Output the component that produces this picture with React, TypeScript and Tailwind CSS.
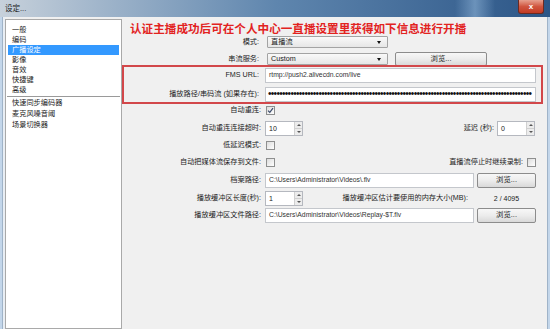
import React from "react";

const labelCls = "text-right text-[7.2px] leading-none text-[#1c1c1c] shrink-0 whitespace-nowrap";

function Check({ checked = false }: { checked?: boolean }) {
  return (
    <div className="w-[9px] h-[9px] border border-[#8e8f8f] bg-gradient-to-br from-[#dcdcdc] to-white flex items-center justify-center">
      {checked && (
        <svg width="7" height="7" viewBox="0 0 7 7">
          <path d="M1 3.6 L2.8 5.4 L6 1.2" stroke="#3a4a6a" strokeWidth="1.2" fill="none" />
        </svg>
      )}
    </div>
  );
}

function Spin({ value, className = "" }: { value: string; className?: string }) {
  return (
    <div className={`w-[38px] h-[15px] border border-[#b5b8bf] bg-white flex ${className}`}>
      <div className="flex-1 text-[7px] leading-none pl-[3px] pt-[3px] text-[#222]">{value}</div>
      <div className="w-[8px] flex flex-col border-l border-[#d0d0d0]">
        <div className="flex-1 bg-[#ececec] border-b border-[#d0d0d0] flex items-center justify-center">
          <div className="w-0 h-0 border-l-[2px] border-r-[2px] border-b-[2px] border-l-transparent border-r-transparent border-b-[#555]" />
        </div>
        <div className="flex-1 bg-[#ececec] flex items-center justify-center">
          <div className="w-0 h-0 border-l-[2px] border-r-[2px] border-t-[2px] border-l-transparent border-r-transparent border-t-[#555]" />
        </div>
      </div>
    </div>
  );
}

function Btn({ w, h = "h-[15px]" }: { w: string; h?: string }) {
  return (
    <div className={`${w} ${h} border border-[#8c8c8c] rounded-[2px] bg-gradient-to-b from-[#f7f7f7] via-[#ececec] to-[#d9d9d9] flex items-center justify-center text-[7.4px] leading-none text-[#222]`}>
      浏览...
    </div>
  );
}

function Select({ text }: { text: string }) {
  return (
    <div className="w-[121px] h-[12px] border border-[#a3a3a3] rounded-[1px] bg-gradient-to-b from-[#f9f9f9] to-[#e6e6e6] flex items-center pl-[3px] pr-[6px]">
      <span className="flex-1 text-[7.2px] leading-none text-[#222]">{text}</span>
      <div className="w-0 h-0 border-l-[2.5px] border-r-[2.5px] border-t-[3px] border-l-transparent border-r-transparent border-t-[#111]" />
    </div>
  );
}

function TextBox({ text, w }: { text: string; w: string }) {
  return (
    <div className={`${w} h-[15px] border border-[#c4c7cc] bg-white flex items-center pl-[3px] overflow-hidden`}>
      <span className="text-[6.8px] leading-none text-[#333] whitespace-nowrap">{text}</span>
    </div>
  );
}

const items = ["一般", "编码", "广播设定", "影像", "音效", "快捷键", "高级"];
const items2 = ["快速同步编码器", "麦克风噪音阈", "场景切换器"];

export default function App() {
  return (
    <div className='w-[550px] h-[329px] overflow-hidden bg-[#f0f0f0] font-["Liberation_Sans","Noto_Sans_CJK_SC",sans-serif]'>
      {/* title bar */}
      <div className="h-[17px] flex items-start bg-gradient-to-r from-[#c7d1db] via-[#5f86ae] to-[#2c5687] relative">
        <div className="text-[7.5px] leading-none text-[#1a1a1a] pl-[5px] pt-[5px]">设定...</div>
        <div className="absolute right-[55px] top-0 w-[40px] h-[17px] bg-gradient-to-r from-transparent via-[#8db2d6]/60 to-transparent" />
        <div className="ml-auto mr-[6px] w-[26px] h-[14px] rounded-b-[3px] border border-t-0 border-[#6b2a22] bg-gradient-to-b from-[#e6a08f] via-[#d0553f] to-[#c23a23] flex items-center justify-center text-white text-[8px] font-bold leading-none relative z-10">
          x
        </div>
      </div>

      <div className="flex h-[312px]">
        <div className="w-[3px] bg-[#c3d6ea] border-r border-[#9fb3c8]" />
        <div className="w-[2px] bg-[#e9eef4]" />
        {/* left list */}
        <div className="w-[117px] mt-[2px] border border-[#a9a9a9] bg-white pt-[5px] px-[1px]">
          {items.map((it) => (
            <div
              key={it}
              className={`h-[10px] flex items-center pl-[4px] mx-[1px] text-[7.2px] leading-none ${
                it === "广播设定" ? "bg-[#3399ff] text-white" : "text-[#1c1c1c]"
              }`}
            >
              {it}
            </div>
          ))}
          <div className="border-t border-[#9a9a9a] mt-[1px]" />
          {items2.map((it) => (
            <div key={it} className="h-[11px] flex items-center pl-[5px] text-[7.2px] leading-none text-[#1c1c1c]">
              {it}
            </div>
          ))}
        </div>

        {/* right panel */}
        <div className="flex-1 flex flex-col">
          <div className="h-[14px] mt-[5px] pl-[8px] flex items-center text-[11.6px] font-bold leading-none text-[#e2231f] whitespace-nowrap">
            认证主播成功后可在个人中心一直播设置里获得如下信息进行开播
          </div>

          <div className="h-[12px] flex items-center">
            <div className={`${labelCls} w-[137px]`}>模式:</div>
            <div className="ml-[8px]">
              <Select text="直播流" />
            </div>
          </div>

          <div className="h-[12px] mt-[5px] flex items-center">
            <div className={`${labelCls} w-[137px]`}>串流服务:</div>
            <div className="ml-[8px]">
              <Select text="Custom" />
            </div>
            <div className="ml-[7px]">
              <Btn w="w-[92px]" h="h-[14px]" />
            </div>
          </div>

          {/* highlighted box */}
          <div className="w-[421px] h-[39px] border-2 border-[#d2474a] flex flex-col justify-between">
            <div className="h-[16px] flex items-center">
              <div className={`${labelCls} w-[135px]`}>FMS URL:</div>
              <div className="ml-[6px]">
                <TextBox text="rtmp://push2.alivecdn.com/live" w="w-[271px]" />
              </div>
            </div>
            <div className="h-[16px] flex items-center">
              <div className={`${labelCls} w-[135px]`}>播放路径/串码流 (如果存在):</div>
              <div className="ml-[6px] w-[271px] h-[15px] border border-[#c4c7cc] bg-white overflow-hidden pl-[2px] flex items-center">
                <span className="text-[10px] leading-none text-[#111] whitespace-nowrap tracking-[-0.7px]">
                  {"•".repeat(94)}
                </span>
              </div>
            </div>
          </div>

          <div className="h-[12px] flex items-center">
            <div className={`${labelCls} w-[139px]`}>自动重连:</div>
            <div className="ml-[5px]">
              <Check checked />
            </div>
          </div>

          <div className="h-[16px] mt-[4px] flex items-center">
            <div className={`${labelCls} w-[139px]`}>自动重连连接超时:</div>
            <Spin value="10" className="ml-[4px]" />
            <div className={`${labelCls} ml-auto`}>延迟 (秒):</div>
            <Spin value="0" className="ml-[3px] mr-[12px]" />
          </div>

          <div className="h-[12px] mt-[3px] flex items-center">
            <div className={`${labelCls} w-[139px]`}>低延迟模式:</div>
            <div className="ml-[5px]">
              <Check />
            </div>
          </div>

          <div className="h-[12px] mt-[5px] flex items-center">
            <div className={`${labelCls} w-[139px]`}>自动把媒体流保存到文件:</div>
            <div className="ml-[5px]">
              <Check />
            </div>
            <div className={`${labelCls} ml-auto`}>直播流停止时继续录制:</div>
            <div className="ml-[4px] mr-[11px]">
              <Check />
            </div>
          </div>

          <div className="h-[16px] mt-[4px] flex items-center">
            <div className={`${labelCls} w-[139px]`}>档案路径:</div>
            <div className="ml-[4px]">
              <TextBox text="C:\Users\Administrator\Videos\.flv" w="w-[209px]" />
            </div>
            <div className="ml-[3px]">
              <Btn w="w-[59px]" />
            </div>
          </div>

          <div className="h-[16px] mt-[2px] flex items-center">
            <div className={`${labelCls} w-[139px]`}>播放缓冲区长度(秒):</div>
            <Spin value="1" className="ml-[4px]" />
            <div className={`${labelCls} ml-auto`}>播放缓冲区估计要使用的内存大小(MB):</div>
            <div className="w-[59px] ml-[9px] mr-[11px] text-center text-[7px] leading-none text-[#222]">2 / 4095</div>
          </div>

          <div className="h-[16px] mt-[1px] flex items-center">
            <div className={`${labelCls} w-[139px]`}>播放缓冲区文件路径:</div>
            <div className="ml-[4px]">
              <TextBox text="C:\Users\Administrator\Videos\Replay-$T.flv" w="w-[209px]" />
            </div>
            <div className="ml-[3px]">
              <Btn w="w-[59px]" />
            </div>
          </div>
        </div>

        <div className="w-[3px] bg-[#c3d6ea] border-l border-[#9fb3c8]" />
      </div>
    </div>
  );
}
